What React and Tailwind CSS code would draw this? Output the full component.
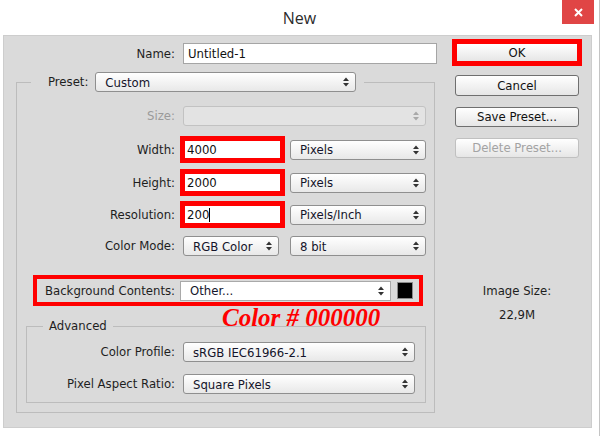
import React from 'react';

const Arrows = ({ disabled }) => (
  <svg width="6" height="10" viewBox="0 0 6 10" className={disabled ? 'fill-[#a8a8a8]' : 'fill-[#333]'}>
    <path d="M3 0.5L6 4H0z" />
    <path d="M0 6h6L3 9.5z" />
  </svg>
);

function Select({ value, className = '', disabled, flat }) {
  let skin = 'border-[#8f8f8f] rounded-[3px] bg-gradient-to-b from-white to-[#e8e8e8] text-[#14142a]';
  if (disabled) skin = 'border-[#c2c2c2] rounded-[3px] bg-[#e3e3e3]';
  if (flat) skin = 'border-[#a9a9a9] bg-white text-[#14142a]';
  return (
    <div className={`flex items-center justify-between h-[20px] border pl-[9px] pr-[6px] ${skin} ${className}`}>
      <span className="leading-none">{value}</span>
      <Arrows disabled={disabled} />
    </div>
  );
}

function Button({ children, disabled, className = '' }) {
  return (
    <div
      className={`flex items-center justify-center rounded-[3px] border bg-gradient-to-b from-white to-[#e6e6e6] ${
        disabled ? 'border-[#c0c0c0] text-[#a3a3a3]' : 'border-[#6f6f6f] text-[#111]'
      } ${className}`}
    >
      {children}
    </div>
  );
}

function RedField({ value, caret }) {
  return (
    <div className="ml-[5px] w-[105px] h-[27px] border-[5px] border-[#ff0000] bg-white flex items-center pl-[2px] text-[#111]">
      <span className="leading-none">{value}</span>
      {caret && <span className="w-px h-[14px] bg-black" />}
    </div>
  );
}

export default function App() {
  return (
    <div className="w-[600px] h-[436px] bg-white flex flex-col overflow-hidden border-r border-[#c4c4c4] font-['DejaVu_Sans_Condensed','Liberation_Sans',sans-serif] text-[13px] text-[#1e1e1e]">
      {/* title bar */}
      <div className="relative h-[35px] shrink-0">
        <div className="text-center pt-[6px] text-[16px] text-[#2b2b2b] font-['Open_Sans',sans-serif]">New</div>
        <div className="absolute right-[5px] top-0 w-[32px] h-[24px] bg-[#e04545] flex items-center justify-center">
          <svg width="9" height="9" viewBox="0 0 9 9" className="stroke-white" strokeWidth="2">
            <path d="M1 1l7 7M8 1l-7 7" />
          </svg>
        </div>
      </div>

      {/* dialog body */}
      <div className="ml-[3px] w-[589px] h-[393px] shrink-0 bg-[#dadada] border border-[#cdcdcd] flex">
        {/* left */}
        <div className="w-[433px] shrink-0 flex flex-col">
          <div className="mt-[7px] flex items-center h-[21px]">
            <div className="w-[171px] text-right">Name:</div>
            <div className="ml-[8px] w-[254px] h-[21px] border border-[#a5a5a5] bg-white flex items-center pl-[4px] text-[#111]">
              Untitled-1
            </div>
          </div>

          <fieldset className="ml-[12px] mt-[8px] w-[419px] min-w-0 border border-[#bcbcbc] p-0 pb-[9px]">
            <legend className="ml-[14px] pl-[17px] pr-[8px]">
              <div className="flex items-center">
                <span>Preset:</span>
                <Select value="Custom" className="ml-[7px] w-[261px]" />
              </div>
            </legend>

            <div className="mt-[14px] flex items-center">
              <div className="w-[158px] text-right text-[#9a9a9a]">Size:</div>
              <Select value="" disabled className="ml-[8px] w-[243px]" />
            </div>

            <div className="mt-[10px] flex items-center">
              <div className="w-[158px] text-right">Width:</div>
              <RedField value="4000" />
              <Select value="Pixels" className="ml-[5px] w-[136px]" />
            </div>

            <div className="mt-[6px] flex items-center">
              <div className="w-[158px] text-right">Height:</div>
              <RedField value="2000" />
              <Select value="Pixels" className="ml-[5px] w-[136px]" />
            </div>

            <div className="mt-[5px] flex items-center">
              <div className="w-[158px] text-right">Resolution:</div>
              <RedField value="200" caret />
              <Select value="Pixels/Inch" className="ml-[5px] w-[136px]" />
            </div>

            <div className="mt-[8px] flex items-center">
              <div className="w-[158px] text-right">Color Mode:</div>
              <Select value="RGB Color" className="ml-[8px] w-[96px]" />
              <Select value="8 bit" className="ml-[11px] w-[136px]" />
            </div>

            <div className="mt-[19px] ml-[16px] w-[390px] h-[31px] border-[4px] border-[#ff0000] flex items-center pl-[8px]">
              <span className="w-[129px] whitespace-nowrap">Background Contents:</span>
              <Select value="Other..." flat className="ml-[6px] w-[211px] h-[19px]" />
              <div className="ml-[6px] w-[16px] h-[17px] bg-black border border-[#8a8a8a]" />
            </div>

            <div className="relative h-0">
              <span className="absolute left-[205px] -top-[1px] leading-none whitespace-nowrap text-[25px] font-bold italic text-[#ff0000] font-['Liberation_Serif',serif]">
                Color # 000000
              </span>
            </div>

            <fieldset className="mt-[12px] ml-[9px] w-[400px] min-w-0 border border-[#bcbcbc] p-0 pb-[8px]">
              <legend className="ml-[16px] px-[6px] leading-[16px]">Advanced</legend>
              <div className="mt-[8px] flex items-center">
                <div className="w-[148px] text-right">Color Profile:</div>
                <Select value="sRGB IEC61966-2.1" className="ml-[8px] w-[232px]" />
              </div>
              <div className="mt-[12px] flex items-center">
                <div className="w-[148px] text-right">Pixel Aspect Ratio:</div>
                <Select value="Square Pixels" className="ml-[8px] w-[232px]" />
              </div>
            </fieldset>
          </fieldset>
        </div>

        {/* right */}
        <div className="ml-[15px] w-[130px] flex flex-col">
          <div className="mt-[3px] h-[27px] border-[5px] border-[#ff0000]">
            <Button className="h-full rounded-none border-0">OK</Button>
          </div>
          <Button className="mt-[9px] ml-[3px] w-[124px] h-[21px]">Cancel</Button>
          <Button className="mt-[11px] ml-[3px] w-[124px] h-[20px]">Save Preset...</Button>
          <Button disabled className="mt-[11px] ml-[3px] w-[124px] h-[20px]">Delete Preset...</Button>
          <div className="mt-[125px] ml-[3px] w-[124px] text-center leading-[16px]">Image Size:</div>
          <div className="mt-[8px] ml-[3px] w-[124px] text-center leading-[16px]">22,9M</div>
        </div>
      </div>
    </div>
  );
}
